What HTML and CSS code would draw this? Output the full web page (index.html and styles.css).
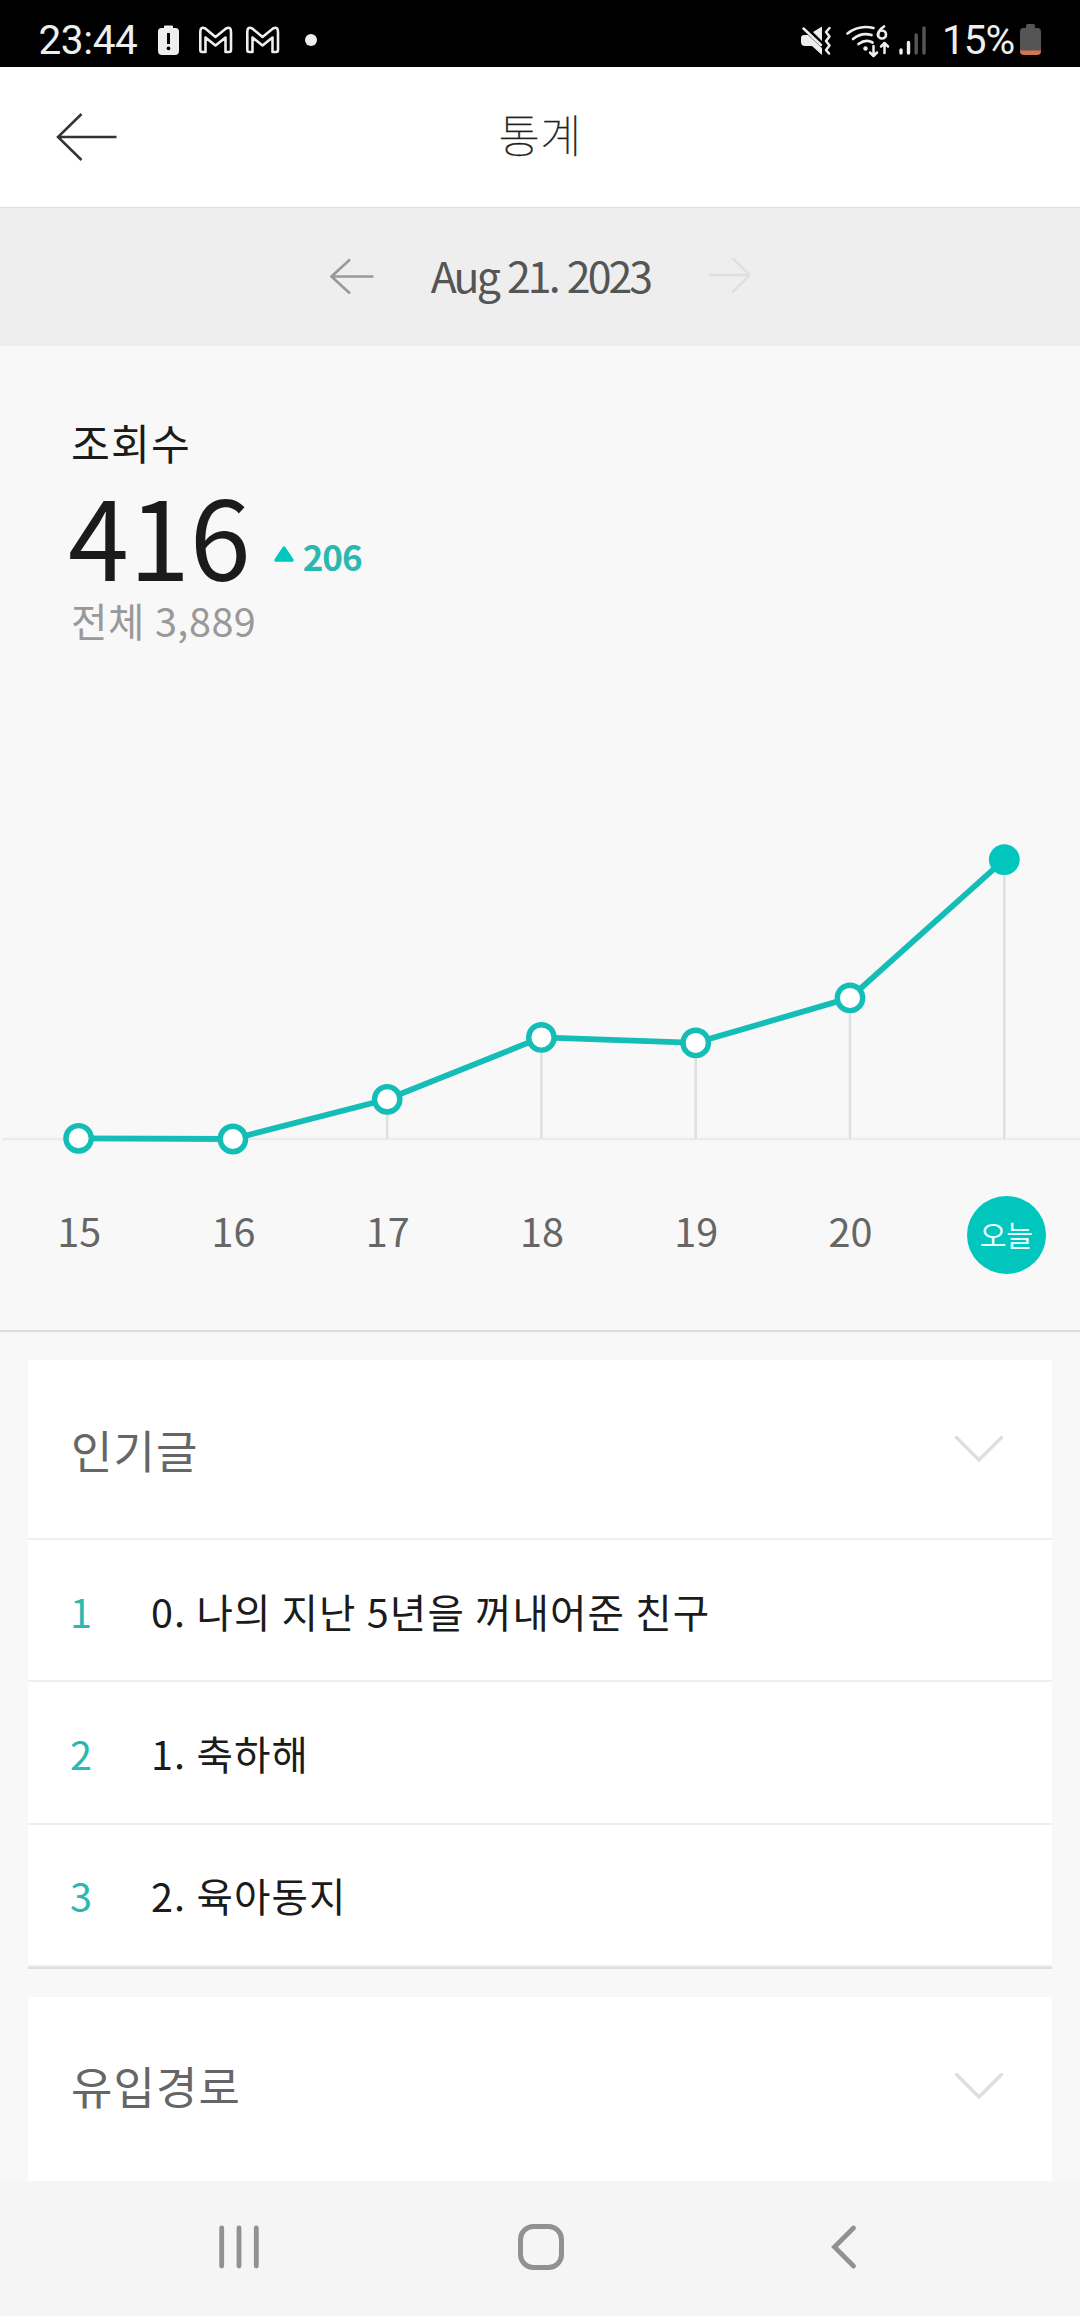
FILE: index.html
```html
<!DOCTYPE html>
<html lang="ko">
<head>
    <meta charset="UTF-8">
    <meta name="viewport" content="width=device-width, initial-scale=1.0">
    <title>통계</title>
    <link rel="stylesheet" href="styles.css">
</head>
<body>

<div class="status-bar">
    <span class="status-time">23:44</span>
    <svg class="status-left-icons" width="164" height="67" viewBox="154 0 164 67">
        <!-- battery warning -->
        <path fill="#eee" fill-rule="evenodd" d="M164 28v-1.500q0-1 1-1h7q1 0 1 1V28h2.500q3.500 0 3.500 3.500V51q0 4-4 4h-13q-4 0-4-4V31.500q0-3.500 3.500-3.500zM167 33v11h3V33zM168.500 46.500a1.900 1.900 0 1 0 .01 0z"/>
        <!-- mail -->
        <path id="mail" fill="none" stroke="#eee" stroke-width="2.600" stroke-linejoin="round" d="M200.300 32q0-6 5-3.500L215.500 37l10.500-8.500q5-2.500 5 3.500v18q0 2-2 2h-3.500V37.500l-10 8-10-8V52h-3.200q-2 0-2-2z"/>
        <use href="#mail" x="47"/>
        <circle cx="311" cy="40" r="6" fill="#eee"/>
    </svg>
    <svg class="status-right-icons" width="130" height="67" viewBox="800 0 130 67">
        <!-- sound off / vibrate -->
        <path fill="#eee" d="M801 38q0-3 3-3h4l14 13v7l-10-9h-7q-4 0-4-4zM813 32l9-5.500V41z"/>
        <path fill="none" stroke="#eee" stroke-width="2.500" stroke-linecap="round" stroke-linejoin="round" d="M803.500 28.500L821 45M829.500 28l-3.500 4 3.500 4.500-3.500 4.500 3.500 4.500-3.500 4.500 3 3.500"/>
        <!-- wifi 6 -->
        <g fill="none" stroke="#eee" stroke-width="2.700" stroke-linecap="round" stroke-linejoin="round">
            <path d="M847.500 33.500q11.500-9 26-5.500M853 39q8.500-7 18.500-4M858.500 44q7.500-5.500 14-1.500"/>
            <path d="M884 26.500q-6 4-6 8.500"/>
            <circle cx="882" cy="34.500" r="4"/>
            <path d="M873.500 46v9.500M870 52.500l3.500 3.500 3.500-3.500M884.500 53v-9.500M881 46.500l3.500-3.500 3.500 3.500" stroke-width="2.500"/>
        </g>
        <circle cx="865.500" cy="48.500" r="2.200" fill="#eee"/>
        <!-- signal -->
        <g stroke-width="3.400" stroke-linecap="round">
            <path stroke="#eee" d="M901 50v3M908.500 42.500V53"/>
            <path stroke="#555" d="M916.200 35v18M924 28v25"/>
        </g>
    </svg>
    <span class="status-percent">15%</span>
    <svg class="status-battery" width="21" height="31" viewBox="0 0 21 31">
        <path fill="#555" d="M6 4V1.500Q6 0 7.500 0h6Q15 0 15 1.500V4h2.500Q21 4 21 8v19H0V8q0-4 3.500-4z"/>
        <path fill="#d87350" d="M0 26.500h21v.5q0 4-4 4H4q-4 0-4-4z"/>
    </svg>
</div>

<div class="header">
    <svg class="back-button" width="62" height="50" viewBox="0 0 62 50">
        <path d="M60.500 25H2M25.500 2L2 25l23.500 23" fill="none" stroke="#333" stroke-width="2.500"/>
    </svg>
    <h1 class="header-title">통계</h1>
</div>

<div class="date-bar">
    <svg class="date-arrow" width="44" height="36" viewBox="0 0 44 36">
        <path d="M43.500 18.500H1.500M20 1.500l-18.500 17L20 35.500" fill="none" stroke="#999" stroke-width="2.600"/>
    </svg>
    <span class="date-text">Aug 21. 2023</span>
    <svg class="date-arrow" width="41" height="36" viewBox="0 0 41 36">
        <path d="M0 17h40.500M23.500 0L41 17 23.500 34" fill="none" stroke="#e0e0e0" stroke-width="2.600"/>
    </svg>
</div>

<div class="views">
    <div class="views-label">조회수</div>
    <div class="views-today">
        <span class="views-count">416</span>
        <svg class="views-up" width="20" height="16" viewBox="0 0 20 16">
            <path d="M10 1.800L18.200 14.200H1.800z" fill="#00c6be" stroke="#00c6be" stroke-width="3" stroke-linejoin="round"/>
        </svg>
        <span class="views-diff">206</span>
    </div>
    <div class="views-total">전체 3,889</div>
</div>

<div class="chart">
    <svg class="chart-graph" width="1080" height="340" viewBox="0 820 1080 340">
        <path d="M2 1139H1080" stroke="#ebebeb" stroke-width="2.400"/>
        <path d="M387.200 1100v39M541.400 1038v101M695.700 1043v96M850 998v141M1004.300 860v279" stroke="#e0e0e0" stroke-width="2.600"/>
        <polyline points="78.600,1138.300 232.900,1139 387.200,1099.300 541.400,1037.400 695.700,1042.900 850,997.900 1004.300,859.600" fill="none" stroke="#14beb7" stroke-width="5.800"/>
        <g fill="#fff" stroke="#14beb7" stroke-width="5.400">
            <circle cx="78.600" cy="1138.300" r="12.700"/>
            <circle cx="232.900" cy="1139" r="12.700"/>
            <circle cx="387.200" cy="1099.300" r="12.700"/>
            <circle cx="541.400" cy="1037.400" r="12.700"/>
            <circle cx="695.700" cy="1042.900" r="12.700"/>
            <circle cx="850" cy="997.900" r="12.700"/>
        </g>
        <circle cx="1004.300" cy="859.600" r="15.400" fill="#00c6be"/>
    </svg>
    <div class="chart-days">
        <span>15</span>
        <span>16</span>
        <span>17</span>
        <span>18</span>
        <span>19</span>
        <span>20</span>
        <span class="today">오늘</span>
    </div>
</div>

<div class="card">
    <div class="card-title">
        <h2>인기글</h2>
        <svg width="48" height="26" viewBox="0 0 48 26">
            <path d="M0 0l24 24L48 0" fill="none" stroke="#dedede" stroke-width="3.400"/>
        </svg>
    </div>
    <div class="post"><span class="post-rank">1</span><span>0. 나의 지난 5년을 꺼내어준 친구</span></div>
    <div class="post"><span class="post-rank">2</span><span>1. 축하해</span></div>
    <div class="post"><span class="post-rank">3</span><span>2. 육아동지</span></div>
</div>

<div class="card card-last">
    <div class="card-title">
        <h2>유입경로</h2>
        <svg width="48" height="26" viewBox="0 0 48 26">
            <path d="M0 0l24 24L48 0" fill="none" stroke="#dedede" stroke-width="3.400"/>
        </svg>
    </div>
</div>

<div class="nav-bar">
    <svg width="42" height="48" viewBox="0 0 42 48">
        <path d="M3.700 5v38M21 5v38M38.300 5v38" stroke="#919191" stroke-width="4.800" stroke-linecap="round"/>
    </svg>
    <svg width="48" height="48" viewBox="0 0 48 48">
        <rect x="3.500" y="3.500" width="41" height="41" rx="13" fill="none" stroke="#919191" stroke-width="5"/>
    </svg>
    <svg width="36" height="48" viewBox="0 0 36 48">
        <path d="M32.500 5L13.500 24l19 19" fill="none" stroke="#919191" stroke-width="4.800" stroke-linecap="round"/>
    </svg>
</div>

</body>
</html>
```

FILE: styles.css
```css
* {
    box-sizing: border-box;
}
body {
    margin: 0;
    width: 1080px;
    height: 2316px;
    overflow: hidden;
    display: flex;
    flex-direction: column;
    background-color: #f8f8f8;
    color: #1b1b1b;
    font-family: "Noto Sans CJK KR", sans-serif;
    font-size: 39.6px;
}
body > div {
    flex-shrink: 0;
}
svg {
    display: block;
    flex-shrink: 0;
}
h1, h2 {
    margin: 0;
    font-size: 45px;
    font-weight: 400;
    letter-spacing: 1.1px;
}

/* Status bar */
.status-bar {
    display: flex;
    height: 67px;
    padding-left: 38.5px;
    background-color: #000;
    color: #eee;
    font-family: Roboto, sans-serif;
    font-size: 40.5px;
    line-height: 80px;
}
.status-time {
    width: 115.5px;
    letter-spacing: -0.4px;
}
.status-right-icons {
    margin-left: 482px;
}
.status-percent {
    width: 90px;
    padding-left: 12px;
    white-space: nowrap;
    letter-spacing: -1px;
}
.status-battery {
    margin-top: 24px;
}

/* Header */
.header {
    display: grid;
    grid-template-columns: 62px 1fr 62px;
    align-items: center;
    height: 141px;
    padding: 0 56px;
    background-color: #fff;
    border-bottom: 1px solid #ddd;
}
.header-title {
    padding-bottom: 7px;
    text-align: center;
    font-weight: 100;
    letter-spacing: 0;
    line-height: 60px;
    color: #222;
    -webkit-text-stroke: 0.3px #222;
}

.date-bar {
    display: flex;
    align-items: center;
    justify-content: center;
    height: 138px;
    padding-bottom: 3px;
    background-color: #eee;
}
.date-text {
    width: 335px;
    padding: 0 2px 3px 0;
    text-align: center;
    font-size: 42.8px;
    letter-spacing: -2.9px;
    line-height: 60px;
    color: #555;
}

/* View count */
.views {
    height: 474px;
    padding: 66px 71px 0;
}
.views-label {
    height: 60px;
    font-size: 42.2px;
    letter-spacing: 1.2px;
    line-height: 60px;
}
.views-today {
    display: flex;
    align-items: baseline;
    height: 120px;
    line-height: 123px;
}
.views-count {
    margin-left: -3px;
    font-size: 109.7px;
}
.views-up {
    margin: 0 9px 0 23px;
    transform: translateY(-19px);
}
.views-diff {
    font-size: 35px;
    font-weight: 700;
    letter-spacing: -1px;
    color: #2ab8b1;
    transform: translateY(-10px);
}
.views-total {
    letter-spacing: 0.5px;
    word-spacing: -1.5px;
    line-height: 56px;
    color: #999;
}

/* Chart */
.chart {
    height: 512px;
    border-bottom: 2px solid #ddd;
}
.chart-days {
    display: grid;
    grid-template-columns: repeat(7, 1fr);
    padding: 36px 0 0 2px;
    width: 1082px;
    text-align: center;
    line-height: 68px;
    color: #666;
}
.today {
    justify-self: center;
    width: 79px;
    height: 78px;
    margin-left: 3px;
    border-radius: 50%;
    background-color: #00c6be;
    color: #e6fffd;
    font-size: 29px;
    line-height: 76px;
}

/* Cards */
.card {
    margin: 28px 28px 0;
    background-color: #fff;
    border-bottom: 2px solid #ddd;
}
.card-title {
    display: flex;
    align-items: center;
    justify-content: space-between;
    height: 180px;
    padding: 0 49px 0 43px;
    border-bottom: 2px solid #eee;
    color: #666;
}
.card-last {
    height: 300px;
}
.card-last .card-title {
    border-color: #fff;
}
.post {
    display: flex;
    align-items: center;
    height: 142.33px;
    padding-left: 42px;
    border-bottom: 2px solid #eee;
    letter-spacing: 1.1px;
    word-spacing: -2px;
}
.post-rank {
    width: 81px;
    color: #2ab8b1;
}

/* Navigation bar */
.nav-bar {
    display: flex;
    justify-content: space-between;
    position: fixed;
    left: 0;
    bottom: 0;
    width: 1080px;
    height: 135px;
    padding: 42px 223px 0 218px;
    background-color: #f5f5f5;
}
```
